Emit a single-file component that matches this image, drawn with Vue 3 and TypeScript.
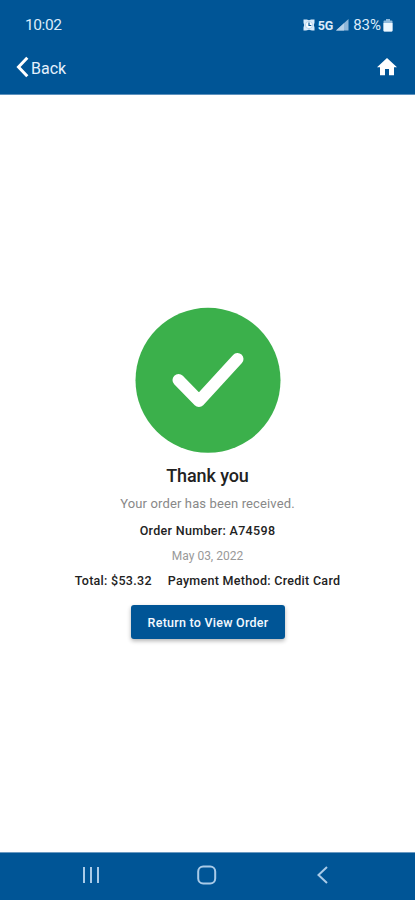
<script setup lang="ts">
interface Order {
  number: string
  date: string
  total: string
  payment: string
}

const order: Order = {
  number: 'A74598',
  date: 'May 03, 2022',
  total: '$53.32',
  payment: 'Credit Card',
}
</script>

<template>
  <div class="screen">
    <header class="header">
      <div class="status">
        <span class="clock">10:02</span>
        <div class="indicators">
          <svg class="alarm" width="12" height="12" viewBox="0 0 12 12">
            <path d="M.5.5h3.300l2.200.7 2.200-.7h3.300v3.300l-.7 2.200.7 2.500v3H9l-3-.8-3 .8H.5v-3L1.200 6 .5 3.800z" fill="#d9ebfb" />
            <circle cx="6" cy="6" r="3.600" fill="#f6fbff" stroke="#86b3da" stroke-width=".5" />
            <path d="M6 3.500V6.500H8.300" fill="none" stroke="#005596" stroke-width="1.200" />
          </svg>
          <span class="network">5G</span>
          <svg class="signal" width="13" height="12" viewBox="0 0 13 12">
            <path d="M12.500 0V11.500H0z" fill="#8fb7d9" />
            <path d="M8 4.200V11.500H0z" fill="#b5d1e9" />
          </svg>
          <span class="percent">83%</span>
          <svg class="battery" width="10" height="13" viewBox="0 0 10 13">
            <path d="M3 0h4v1.500h1.500q1 0 1 1V11.500q0 1-1 1h-7q-1 0-1-1v-9q0-1 1-1H3z" fill="#8fb9dc" />
            <path d="M.5 4h9v7.500q0 1-1 1h-7q-1 0-1-1z" fill="#edf7ff" />
          </svg>
        </div>
      </div>
      <nav class="toolbar">
        <a class="back">
          <svg width="13" height="22" viewBox="0 0 13 22">
            <path d="M11.300 1.700L2.500 11L11.300 20.300" fill="none" stroke="#fff" stroke-width="3" />
          </svg>
          <span class="back-label">Back</span>
        </a>
        <svg class="home" width="22" height="20" viewBox="0 0 22 20">
          <path d="M11 1L21 10.200H18V18.200H13V12H9V18.200H4V10.200H1z" fill="#fff" />
        </svg>
      </nav>
    </header>

    <main class="content">
      <svg class="success" width="146" height="146" viewBox="0 0 146 146">
        <circle cx="73" cy="73.300" r="72.500" fill="#3bb04b" />
        <path d="M43.500 73L64 94L102.500 52" fill="none" stroke="#fff" stroke-width="12" stroke-linecap="round" stroke-linejoin="round" />
      </svg>
      <h1 class="title">Thank you</h1>
      <p class="message">Your order has been received.</p>
      <p class="number">Order Number: {{ order.number }}</p>
      <p class="date">{{ order.date }}</p>
      <div class="summary">
        <span class="total">Total: {{ order.total }}</span>
        <span class="payment">Payment Method: {{ order.payment }}</span>
      </div>
      <button class="return" type="button">Return to View Order</button>
    </main>

    <footer class="system">
      <svg width="18" height="18" viewBox="0 0 18 18">
        <path d="M2 1V17M9 1V17M16 1V17" stroke="#a9cbe8" stroke-width="2" />
      </svg>
      <svg width="20" height="20" viewBox="0 0 20 20">
        <rect x="1.200" y="1.500" width="17" height="17" rx="5" fill="none" stroke="#a9cbe8" stroke-width="2" />
      </svg>
      <svg width="18" height="18" viewBox="0 0 18 18">
        <path d="M14 1L5.500 9L14 17" fill="none" stroke="#a9cbe8" stroke-width="2" />
      </svg>
    </footer>
  </div>
</template>

<style>
body {
  margin: 0;
}
</style>

<style scoped>
.screen {
  display: flex;
  flex-direction: column;
  height: 900px;
  overflow: hidden;
  background: #fff;
  font-family: Roboto, "Liberation Sans", sans-serif;
  white-space: nowrap;
}
.header {
  box-sizing: border-box;
  height: 95px;
  flex: none;
  background: #005596;
  border-bottom: 1px solid #5d91bd;
}
.status {
  display: flex;
  justify-content: space-between;
  align-items: center;
  height: 50px;
  padding: 0 22px 0 25px;
  color: #dcecfa;
}
.clock {
  font-size: 15.500px;
  letter-spacing: -0.4px;
}
.indicators {
  display: flex;
  align-items: center;
}
.network {
  margin-left: 3px;
  font-size: 12.500px;
  font-weight: 700;
  letter-spacing: -0.1px;
}
.signal {
  margin-left: 3px;
}
.percent {
  margin-left: 4px;
  padding-right: 2px;
  font-size: 15px;
}
.toolbar {
  display: flex;
  justify-content: space-between;
  align-items: center;
  height: 34px;
  padding: 0 17px 0 16px;
}
.back {
  display: flex;
  align-items: center;
  gap: 2px;
}
.back-label {
  color: #e5f1fd;
  font-size: 16px;
  line-height: 20px;
  padding-top: 3px;
}
.content {
  display: flex;
  flex-direction: column;
  align-items: center;
  flex: 1;
  padding-top: 212px;
}
.title {
  margin: 11px 0 0;
  font-size: 18px;
  font-weight: 500;
  line-height: 24px;
  letter-spacing: -0.1px;
  color: #222;
}
.message,
.number,
.date {
  margin: 0;
}
.message {
  margin-top: 6px;
  font-size: 13px;
  line-height: 20px;
  letter-spacing: 0.13px;
  color: #888;
}
.number {
  margin-top: 7px;
  font-size: 12.500px;
  font-weight: 500;
  line-height: 20px;
  letter-spacing: 0.32px;
  color: #222;
}
.date {
  margin-top: 5px;
  font-size: 12px;
  line-height: 20px;
  color: #999;
}
.summary {
  display: flex;
  gap: 16px;
  margin-top: 5px;
  font-size: 12.500px;
  font-weight: 500;
  line-height: 20px;
  letter-spacing: 0.29px;
  color: #222;
}
.return {
  width: 154px;
  height: 34px;
  margin-top: 14px;
  padding: 2px 0 0 1px;
  border: 0;
  border-radius: 3px;
  background: #005596;
  box-shadow: 0 2px 4px rgba(0, 0, 0, 0.3);
  color: #f3f9ff;
  font-family: inherit;
  font-size: 12.500px;
  font-weight: 500;
  line-height: 32px;
  letter-spacing: 0.25px;
  white-space: nowrap;
}
.system {
  display: flex;
  justify-content: space-between;
  align-items: center;
  box-sizing: border-box;
  flex: none;
  height: 48px;
  padding: 0 84px 3px 82px;
  background: #005596;
  border-top: 1px solid #6b9ac2;
}
</style>
